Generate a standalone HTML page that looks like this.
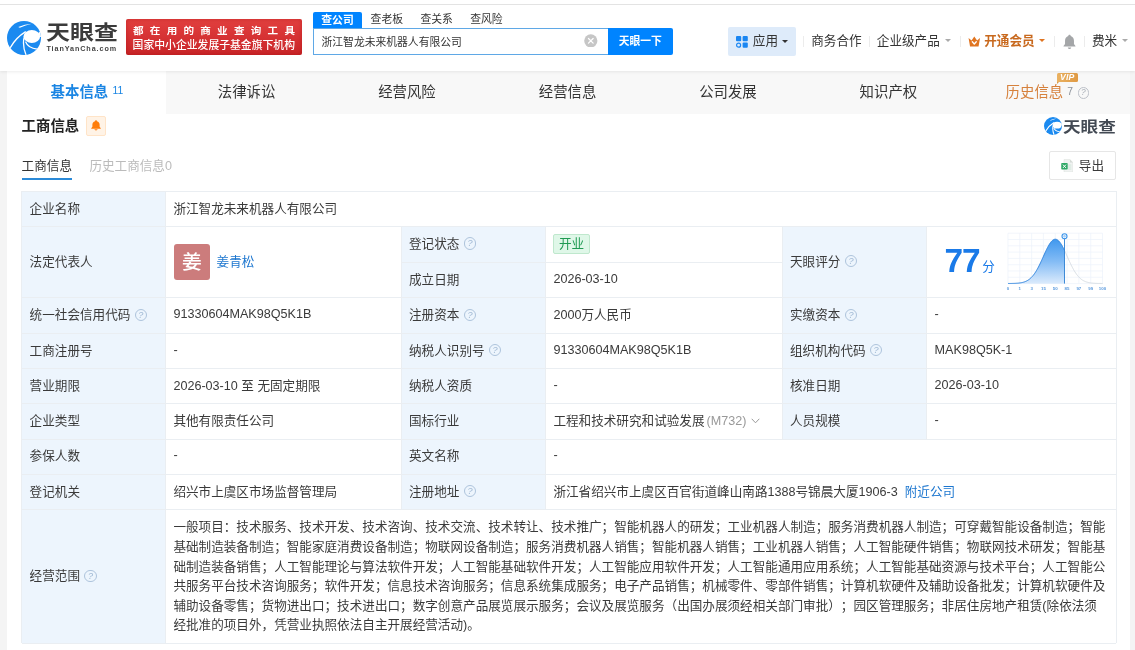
<!DOCTYPE html>
<html lang="zh-CN">
<head>
<meta charset="utf-8">
<title>浙江智龙未来机器人有限公司 - 天眼查</title>
<style>
*{box-sizing:border-box;margin:0;padding:0}
html,body{width:1135px;height:650px;overflow:hidden;background:#f4f4f4}
body{position:relative;font-family:"Liberation Sans","Noto Sans CJK SC",sans-serif;font-size:12.6px;color:#3a3a3a;-webkit-font-smoothing:antialiased;text-spacing-trim:space-all;will-change:transform}
.abs{position:absolute}
.t{position:absolute;white-space:nowrap;line-height:20px;height:20px}
/* header */
#hdr{position:absolute;left:0;top:0;width:1135px;height:70.6px;background:#fff;box-shadow:0 1px 3px rgba(0,0,0,.08);z-index:5}
#topline{position:absolute;left:0;top:4px;width:1135px;height:1px;background:#e3e3e3}
#banner{position:absolute;left:126px;top:19px;width:176px;height:36px;border-radius:2px;background:linear-gradient(180deg,#e2403f 0%,#d63234 50%,#c92528 100%);box-shadow:inset 0 0 4px rgba(150,0,0,.35);color:#fff;overflow:hidden}
#banner .l1{position:absolute;left:6.6px;top:5.9px;font-size:9.6px;font-weight:700;letter-spacing:5.7px;line-height:12px;white-space:nowrap;transform-origin:0 50%;transform:scaleX(1.1)}
#banner .l2{position:absolute;left:6.6px;top:20px;font-size:10.83px;font-weight:500;line-height:13px;white-space:nowrap;letter-spacing:0}
/* search */
.stab{position:absolute;top:11px;height:17px;line-height:17px;font-size:10.8px;color:#333;white-space:nowrap}
#stab1{left:313px;width:49px;background:#0084ff;color:#fff;font-weight:700;text-align:center;border-radius:2px 2px 0 0;top:12px;height:17px}
#sinput{position:absolute;left:313px;top:28px;width:296px;height:27px;border:1px solid #5fa8e6;background:#fff;border-right:none}
#sinput span{position:absolute;left:7.5px;top:0;line-height:26.6px;font-size:10.8px;color:#333;white-space:nowrap}
#sbtn{position:absolute;left:608px;top:28px;width:64.6px;height:27px;background:#0084ff;color:#fff;font-weight:700;font-size:10.8px;line-height:26px;text-align:center;border-radius:0 2px 2px 0}
#sclear{position:absolute;left:584.2px;top:33.6px;width:13.6px;height:13.6px}
/* nav right */
#appbtn{position:absolute;left:728px;top:27px;width:68.4px;height:28.6px;background:#deebfa;border-radius:2px}
.nv{position:absolute;top:31px;line-height:20px;font-size:12.6px;color:#333;white-space:nowrap}
.sep{position:absolute;top:36px;width:1px;height:11px;background:#ececec}
.caret{position:absolute;width:0;height:0;border-left:3.2px solid transparent;border-right:3.2px solid transparent;border-top:3.4px solid #aaa}
/* tab bar */
#tabbar{position:absolute;left:6.8px;top:70px;width:1123.4px;height:44px;background:#f8f8f8}
#tabact{position:absolute;left:0;top:0;width:159px;height:44px;background:#fff}
.tab{position:absolute;top:81.6px;line-height:20px;font-size:14.4px;color:#333;white-space:nowrap}
/* card */
#card{position:absolute;left:6.8px;top:114px;width:1123.4px;height:536px;background:#fff}
/* table */
.lab{position:absolute;background:#edf5fd}
.hl{position:absolute;left:21.8px;width:1094px;height:1px;background:#eaeef2}
.vl{position:absolute;width:1px;background:#eaeef2}
.q{display:inline-block;width:12.4px;height:12.4px;border:1px solid #aec4dc;border-radius:50%;vertical-align:-1.6px;margin-left:4.4px;position:relative}
.q:after{content:"?";position:absolute;left:0;top:0;width:10.4px;height:10.4px;line-height:10.8px;text-align:center;font-size:9.2px;color:#a0b9d4;font-family:"Liberation Sans",sans-serif}
.qg:after{color:#aab0b8;width:9.4px;height:9.4px;line-height:9.8px;font-size:8.4px}
.ln{margin-top:-1px}
.lk{color:#1c76cf}
</style>
</head>
<body>
<!-- HEADER -->
<div id="hdr">
  <div id="topline"></div>
  <!-- logo -->
  <svg class="abs" style="left:7.1px;top:20.7px" width="34" height="34" viewBox="0 0 100 100">
    <defs><clipPath id="lc"><circle cx="50" cy="50" r="50"/></clipPath></defs>
    <circle cx="50" cy="50" r="50" fill="#1b8af0"/>
    <g clip-path="url(#lc)" fill="none" stroke="#fff" stroke-linecap="round">
      <ellipse cx="73" cy="45.5" rx="24.5" ry="19" fill="#fff" stroke="none"/>
      <path d="M92 35.5 L102 27 L102 47 L97 47 Z" fill="#fff" stroke="none"/>
      <path d="M10 78 C20 60 34 44 54 32" stroke-width="4.2"/>
      <path d="M56 100 C50 85 46 68 50 50" stroke-width="3.8"/>
      <path d="M89 83 C74 81 60 75 55 62" stroke-width="3.6"/>
      <path d="M33 18 Q52 9 73 8 Q54 13 38 20 Z" fill="#fff" stroke="none"/>
    </g>
  </svg>
  <div class="abs" id="logotxt" style="left:45.6px;top:16.2px;font-family:'Noto Sans CJK SC',sans-serif;font-weight:700;font-size:20.4px;line-height:30px;color:#3b3b3b;white-space:nowrap;transform-origin:0 50%;transform:scaleX(1.175)">天眼查</div>
  <div class="abs" id="logosub" style="left:46.4px;top:44px;font-weight:700;font-size:7.2px;line-height:10px;letter-spacing:.92px;color:#444;white-space:nowrap">TianYanCha.com</div>
  <!-- banner -->
  <div id="banner"><div class="l1">都在用的商业查询工具</div><div class="l2">国家中小企业发展子基金旗下机构</div></div>
  <!-- search -->
  <div class="stab" id="stab1">查公司</div>
  <div class="stab" style="left:370.6px">查老板</div>
  <div class="stab" style="left:420.4px">查关系</div>
  <div class="stab" style="left:470.2px">查风险</div>
  <div id="sinput"><span>浙江智龙未来机器人有限公司</span></div>
  <svg id="sclear" viewBox="0 0 14 14"><circle cx="7" cy="7" r="6.8" fill="#c6c6c6"/><path d="M4.6 4.6 L9.4 9.4 M9.4 4.6 L4.6 9.4" stroke="#fff" stroke-width="1.3" stroke-linecap="round"/></svg>
  <div id="sbtn">天眼一下</div>
  <!-- right nav -->
  <div id="appbtn"></div>
  <svg class="abs" style="left:736.2px;top:36px" width="12" height="12" viewBox="0 0 12 12">
    <rect x="0" y="0" width="5.2" height="5.2" rx="1" fill="#1a86f2"/>
    <rect x="6.6" y="0" width="5.2" height="5.2" rx="1" fill="#1a86f2"/>
    <rect x="6.6" y="6.6" width="5.2" height="5.2" rx="1" fill="#1a86f2"/>
    <circle cx="2.6" cy="9.2" r="2" fill="none" stroke="#1a86f2" stroke-width="1.2"/>
  </svg>
  <div class="nv" style="left:752.8px">应用</div>
  <div class="caret" style="left:782.4px;top:40.2px;border-top-color:#333"></div>
  <div class="sep" style="left:803px"></div>
  <div class="nv" style="left:811.2px">商务合作</div>
  <div class="sep" style="left:869px"></div>
  <div class="nv" style="left:876.8px">企业级产品</div>
  <div class="caret" style="left:944.6px;top:39.2px"></div>
  <div class="sep" style="left:960px"></div>
  <svg class="abs" style="left:967.6px;top:35.6px" width="12.6" height="11" viewBox="0 0 25 22">
    <path d="M1 4 L7 9 L12.5 1 L18 9 L24 4 L21 21 L4 21 Z" fill="#e07420"/>
    <path d="M8.5 11.5 L12.5 16 L16.5 11.5" fill="none" stroke="#fff" stroke-width="2.6" stroke-linecap="round" stroke-linejoin="round"/>
  </svg>
  <div class="nv" style="left:984.2px;font-weight:700;color:#c8691e">开通会员</div>
  <div class="caret" style="left:1038.8px;top:39.2px;border-top-color:#e07420"></div>
  <div class="sep" style="left:1054.4px"></div>
  <svg class="abs" style="left:1063.4px;top:33.8px" width="13" height="15.4" viewBox="0 0 26 31">
    <path d="M13 1.5 C14.4 1.5 15.4 2.6 15.4 4 C19.6 5.2 22 9 22 13.5 L22 20 L25 24 L25 25.4 L1 25.4 L1 24 L4 20 L4 13.5 C4 9 6.4 5.2 10.6 4 C10.6 2.6 11.6 1.5 13 1.5 Z" fill="#a4a6a8"/>
    <path d="M9.6 27.2 L16.4 27.2 C16.4 29 14.9 30.2 13 30.2 C11.1 30.2 9.6 29 9.6 27.2 Z" fill="#a4a6a8"/>
  </svg>
  <div class="sep" style="left:1084px"></div>
  <div class="nv" style="left:1092px">费米</div>
  <div class="caret" style="left:1121.6px;top:39.2px"></div>
</div>

<!-- TAB BAR -->
<div id="tabbar"><div id="tabact"></div></div>
<div class="tab" style="left:50.6px;font-weight:700;color:#1a85e3">基本信息</div>
<div class="abs" style="left:112.4px;top:85.4px;font-size:10.4px;line-height:12px;color:#1a85e3">11</div>
<div class="tab" style="left:217.8px">法律诉讼</div>
<div class="tab" style="left:378.2px">经营风险</div>
<div class="tab" style="left:538.8px">经营信息</div>
<div class="tab" style="left:699.2px">公司发展</div>
<div class="tab" style="left:859.6px">知识产权</div>
<div class="tab" style="left:1005.6px;color:#d6813c">历史信息</div>

<div class="abs" style="left:1067.2px;top:86.2px;font-size:10.4px;line-height:12px;color:#8a9099">7</div>
<i class="q qg abs" style="left:1077.6px;top:86px;margin:0;width:11.4px;height:11.4px;border-color:#bcc0c8" id="hq"></i>
<div class="abs" id="vip" style="left:1056.6px;top:73px;width:21.2px;height:9.4px;border-radius:1.5px 1.5px 1.5px 0;background:linear-gradient(90deg,#eab262,#e09a44);color:#fff;font-size:8.6px;font-weight:700;font-style:italic;line-height:9.6px;text-align:center;letter-spacing:.1px">VIP</div>
<div class="abs" style="left:1056.6px;top:82.2px;width:0;height:0;border-top:2.6px solid #d99a48;border-right:2.6px solid transparent"></div>
<!-- CARD -->
<div id="card"></div>

<!-- section heading -->
<div class="abs" style="left:21.6px;top:116px;font-size:14.4px;font-weight:700;line-height:20px;color:#222;white-space:nowrap">工商信息</div>
<div class="abs" style="left:86px;top:116px;width:19.6px;height:19.6px;border:1px solid #ffe4c8;background:#fff3e6;border-radius:2px"></div>
<svg class="abs" style="left:91.1px;top:120.2px" width="10" height="10.6" viewBox="0 0 26 31" preserveAspectRatio="none">
  <path d="M13 1 C14.6 1 15.6 2.4 15.6 4 C19.8 5.2 22.4 9 22.4 13.5 L22.4 20 L25.4 24 L25.4 25.6 L0.6 25.6 L0.6 24 L3.6 20 L3.6 13.5 C3.6 9 6.2 5.2 10.4 4 C10.4 2.4 11.4 1 13 1 Z" fill="#ff7d0a"/>
  <path d="M9 27.4 L17 27.4 C17 29.4 15.2 30.6 13 30.6 C10.8 30.6 9 29.4 9 27.4 Z" fill="#ff7d0a"/>
</svg>
<!-- small logo right -->
<svg class="abs" style="left:1043.6px;top:117px" width="18" height="18" viewBox="0 0 100 100">
  <defs><clipPath id="lc2"><circle cx="50" cy="50" r="50"/></clipPath></defs>
  <circle cx="50" cy="50" r="50" fill="#1b8af0"/>
  <g clip-path="url(#lc2)" fill="none" stroke="#fff" stroke-linecap="round">
    <ellipse cx="73" cy="45.5" rx="24.5" ry="19" fill="#fff" stroke="none"/>
    <path d="M92 35.5 L102 27 L102 47 L97 47 Z" fill="#fff" stroke="none"/>
    <path d="M10 78 C20 60 34 44 54 32" stroke-width="6.5"/>
    <path d="M56 100 C50 85 46 68 50 50" stroke-width="5.6"/>
    <path d="M89 83 C74 81 60 75 55 62" stroke-width="5.6"/>
    <path d="M33 18 Q52 9 73 8 Q54 13 38 20 Z" fill="#fff" stroke="none"/>
  </g>
</svg>
<div class="abs" id="logo2txt" style="left:1063.4px;top:114px;font-family:'Noto Sans CJK SC',sans-serif;font-weight:700;font-size:14.8px;line-height:24px;color:#434a54;white-space:nowrap;transform-origin:0 50%;transform:scaleX(1.19)">天眼查</div>
<!-- sub tabs -->
<div class="t" style="left:21.6px;top:155.6px;color:#333">工商信息</div>
<div class="t" style="left:89.4px;top:155.6px;color:#bbb">历史工商信息0</div>
<div class="abs" style="left:21.8px;top:178.4px;width:50px;height:2px;background:#2b8ad8"></div>
<!-- export button -->
<div class="abs" style="left:1049.2px;top:151.4px;width:66.8px;height:28.6px;border:1px solid #e6e6e6;border-radius:2px;background:#fff"></div>
<svg class="abs" style="left:1061px;top:158.6px" width="12.4" height="13.6" viewBox="0 0 25 27">
  <path d="M6 1 L18 1 L24 7 L24 26 L6 26 Z" fill="#f1f3f2" stroke="#d9dedb" stroke-width="1"/>
  <path d="M18 1 L18 7 L24 7 Z" fill="#d4dad6"/>
  <rect x="14" y="11" width="7" height="2" fill="#cfe6d8"/><rect x="14" y="15" width="7" height="2" fill="#cfe6d8"/><rect x="14" y="19" width="7" height="2" fill="#cfe6d8"/>
  <rect x="0.5" y="8" width="13" height="13" rx="1.5" fill="#2fa866"/>
  <path d="M4 11.2 L10 17.8 M10 11.2 L4 17.8" stroke="#fff" stroke-width="2"/>
</svg>
<div class="t" style="left:1078.8px;top:155.6px">导出</div>
<!-- table -->
<div class="lab" style="left:21.8px;top:191.4px;width:143.8px;height:452.1px"></div>
<div class="lab" style="left:401.2px;top:226.2px;width:144.4px;height:283.1px"></div>
<div class="lab" style="left:782.2px;top:226.2px;width:144.6px;height:212.8px"></div>
<div class="hl" style="top:190.9px"></div>
<div class="hl" style="top:225.7px"></div>
<div class="hl" style="top:261.7px;left:401.2px;width:381.0px"></div>
<div class="hl" style="top:297.1px"></div>
<div class="hl" style="top:332.8px"></div>
<div class="hl" style="top:367.9px"></div>
<div class="hl" style="top:403.0px"></div>
<div class="hl" style="top:438.5px"></div>
<div class="hl" style="top:473.7px"></div>
<div class="hl" style="top:508.8px"></div>
<div class="hl" style="top:643.0px"></div>
<div class="vl" style="left:21.3px;top:191.4px;height:452.1px"></div>
<div class="vl" style="left:1115.5px;top:191.4px;height:452.1px"></div>
<div class="vl" style="left:165.1px;top:191.4px;height:452.1px"></div>
<div class="vl" style="left:400.7px;top:226.2px;height:283.1px"></div>
<div class="vl" style="left:545.1px;top:226.2px;height:283.1px"></div>
<div class="vl" style="left:781.7px;top:226.2px;height:212.8px"></div>
<div class="vl" style="left:926.3px;top:226.2px;height:212.8px"></div>
<div class="t" style="left:29.6px;top:198.8px;">企业名称</div>
<div class="t" style="left:173.4px;top:198.8px;">浙江智龙未来机器人有限公司</div>
<div class="t" style="left:29.6px;top:251.9px;">法定代表人</div>
<div class="t" style="left:29.6px;top:305.45px;">统一社会信用代码<i class="q"></i></div>
<div class="t ln" style="left:173.4px;top:305.45px;">91330604MAK98Q5K1B</div>
<div class="t" style="left:29.6px;top:340.85px;">工商注册号</div>
<div class="t ln" style="left:173.4px;top:340.85px;">-</div>
<div class="t" style="left:29.6px;top:375.95px;">营业期限</div>
<div class="t" style="left:173.4px;top:375.95px;">2026-03-10 至 无固定期限</div>
<div class="t" style="left:29.6px;top:411.1px;">企业类型</div>
<div class="t" style="left:173.4px;top:411.1px;">其他有限责任公司</div>
<div class="t" style="left:29.6px;top:446.45px;">参保人数</div>
<div class="t ln" style="left:173.4px;top:446.45px;">-</div>
<div class="t" style="left:29.6px;top:481.75px;">登记机关</div>
<div class="t" style="left:173.4px;top:481.75px;">绍兴市上虞区市场监督管理局</div>
<div class="t" style="left:29.6px;top:566.4px;">经营范围<i class="q"></i></div>
<div class="t" style="left:409.0px;top:234.2px;">登记状态<i class="q"></i></div>
<div class="t" style="left:409.0px;top:269.9px;">成立日期</div>
<div class="t ln" style="left:553.4px;top:269.9px;">2026-03-10</div>
<div class="t" style="left:409.0px;top:305.45px;">注册资本<i class="q"></i></div>
<div class="t" style="left:553.4px;top:305.45px;">2000万人民币</div>
<div class="t" style="left:409.0px;top:340.85px;">纳税人识别号<i class="q"></i></div>
<div class="t ln" style="left:553.4px;top:340.85px;">91330604MAK98Q5K1B</div>
<div class="t" style="left:409.0px;top:375.95px;">纳税人资质</div>
<div class="t ln" style="left:553.4px;top:375.95px;">-</div>
<div class="t" style="left:409.0px;top:411.1px;">国标行业</div>
<div class="t" style="left:553.4px;top:411.1px;">工程和技术研究和试验发展<span style="color:#999;margin-left:2px">(M732)</span><svg width="9" height="6" viewBox="0 0 9 6" style="margin-left:5px;vertical-align:1.5px"><path d="M0.7 0.8 L4.5 4.8 L8.3 0.8" fill="none" stroke="#999" stroke-width="1"/></svg></div>
<div class="t" style="left:409.0px;top:446.45px;">英文名称</div>
<div class="t ln" style="left:553.4px;top:446.45px;">-</div>
<div class="t" style="left:409.0px;top:481.75px;">注册地址<i class="q"></i></div>
<div class="t" style="left:553.4px;top:481.75px;">浙江省绍兴市上虞区百官街道峰山南路1388号锦晨大厦1906-3<span class="lk" style="margin-left:7px">附近公司</span></div>
<div class="t" style="left:790.0px;top:251.9px;">天眼评分<i class="q"></i></div>
<div class="t" style="left:790.0px;top:305.45px;">实缴资本<i class="q"></i></div>
<div class="t ln" style="left:934.6px;top:305.45px;">-</div>
<div class="t" style="left:790.0px;top:340.85px;">组织机构代码<i class="q"></i></div>
<div class="t ln" style="left:934.6px;top:340.85px;">MAK98Q5K-1</div>
<div class="t" style="left:790.0px;top:375.95px;">核准日期</div>
<div class="t ln" style="left:934.6px;top:375.95px;">2026-03-10</div>
<div class="t" style="left:790.0px;top:411.1px;">人员规模</div>
<div class="t ln" style="left:934.6px;top:411.1px;">-</div>
<div class="abs" id="tag" style="left:552.6px;top:233.8px;width:37.8px;height:20px;border:1px solid #bfe8cd;background:#dff7e8;border-radius:2px;color:#1f9a52;text-align:center;line-height:18px;font-size:12.6px">开业</div>
<div class="abs" id="ava" style="left:173.8px;top:244px;width:36px;height:36px;border-radius:3px;background:#cc7c7c;color:#fff;font-size:19.8px;font-weight:500;line-height:37.6px;text-align:center">姜</div>
<div class="t lk" style="left:216.6px;top:252px">姜青松</div>
<div class="t" style="left:173.4px;top:517.2px;">一般项目：技术服务、技术开发、技术咨询、技术交流、技术转让、技术推广；智能机器人的研发；工业机器人制造；服务消费机器人制造；可穿戴智能设备制造；智能</div>
<div class="t" style="left:173.4px;top:536.85px;">基础制造装备制造；智能家庭消费设备制造；物联网设备制造；服务消费机器人销售；智能机器人销售；工业机器人销售；人工智能硬件销售；物联网技术研发；智能基</div>
<div class="t" style="left:173.4px;top:556.5px;">础制造装备销售；人工智能理论与算法软件开发；人工智能基础软件开发；人工智能应用软件开发；人工智能通用应用系统；人工智能基础资源与技术平台；人工智能公</div>
<div class="t" style="left:173.4px;top:576.1px;">共服务平台技术咨询服务；软件开发；信息技术咨询服务；信息系统集成服务；电子产品销售；机械零件、零部件销售；计算机软硬件及辅助设备批发；计算机软硬件及</div>
<div class="t" style="left:173.4px;top:595.7px;">辅助设备零售；货物进出口；技术进出口；数字创意产品展览展示服务；会议及展览服务（出国办展须经相关部门审批）；园区管理服务；非居住房地产租赁(除依法须</div>
<div class="t" style="left:173.4px;top:615.3px;">经批准的项目外，凭营业执照依法自主开展经营活动)。</div>
<!-- score -->
<svg class="abs" id="chart" style="left:1000px;top:228px" width="112" height="66" viewBox="0 0 112 66">
<defs><linearGradient id="cg" x1="0" y1="0" x2="0" y2="1"><stop offset="0" stop-color="#4098ee"/><stop offset="0.5" stop-color="#84bcf5"/><stop offset="1" stop-color="#dcebfc"/></linearGradient></defs>
<path d="M8.00 5.20 L8.00 55.60 M19.81 5.20 L19.81 55.60 M31.62 5.20 L31.62 55.60 M43.44 5.20 L43.44 55.60 M55.25 5.20 L55.25 55.60 M67.06 5.20 L67.06 55.60 M78.88 5.20 L78.88 55.60 M90.69 5.20 L90.69 55.60 M102.50 5.20 L102.50 55.60 M8.00 5.20 L102.50 5.20 M8.00 11.50 L102.50 11.50 M8.00 17.80 L102.50 17.80 M8.00 24.10 L102.50 24.10 M8.00 30.40 L102.50 30.40 M8.00 36.70 L102.50 36.70 M8.00 43.00 L102.50 43.00 M8.00 49.30 L102.50 49.30 M8.00 55.60 L102.50 55.60" fill="none" stroke="#edf2fa" stroke-width="0.7"/>
<path d="M8.00 55.80 L8.00 55.48 L8.50 55.48 L9.00 55.47 L9.50 55.47 L10.00 55.46 L10.50 55.46 L11.00 55.45 L11.50 55.44 L12.00 55.43 L12.50 55.42 L13.00 55.41 L13.50 55.40 L14.00 55.38 L14.50 55.36 L15.00 55.34 L15.50 55.32 L16.00 55.29 L16.50 55.26 L17.00 55.23 L17.50 55.19 L18.00 55.15 L18.50 55.10 L19.00 55.04 L19.50 54.98 L20.00 54.91 L20.50 54.84 L21.00 54.75 L21.50 54.66 L22.00 54.56 L22.50 54.44 L23.00 54.32 L23.50 54.18 L24.00 54.02 L24.50 53.86 L25.00 53.67 L25.50 53.47 L26.00 53.25 L26.50 53.01 L27.00 52.75 L27.50 52.47 L28.00 52.17 L28.50 51.84 L29.00 51.49 L29.50 51.11 L30.00 50.70 L30.50 50.26 L31.00 49.80 L31.50 49.30 L32.00 48.77 L32.50 48.21 L33.00 47.62 L33.50 46.99 L34.00 46.33 L34.50 45.64 L35.00 44.91 L35.50 44.14 L36.00 43.35 L36.50 42.52 L37.00 41.65 L37.50 40.76 L38.00 39.83 L38.50 38.87 L39.00 37.89 L39.50 36.88 L40.00 35.85 L40.50 34.79 L41.00 33.72 L41.50 32.63 L42.00 31.53 L42.50 30.42 L43.00 29.30 L43.50 28.18 L44.00 27.07 L44.50 25.95 L45.00 24.85 L45.50 23.76 L46.00 22.69 L46.50 21.64 L47.00 20.62 L47.50 19.64 L48.00 18.68 L48.50 17.77 L49.00 16.90 L49.50 16.08 L50.00 15.32 L50.50 14.61 L51.00 13.95 L51.50 13.37 L52.00 12.84 L52.50 12.39 L53.00 12.01 L53.50 11.70 L54.00 11.46 L54.50 11.30 L55.00 11.21 L55.50 11.21 L56.00 11.28 L56.50 11.42 L57.00 11.64 L57.50 11.94 L58.00 12.31 L58.50 12.75 L59.00 13.26 L59.50 13.83 L60.00 14.47 L60.50 15.17 L61.00 15.93 L61.50 16.74 L62.00 17.59 L62.50 18.50 L63.00 19.44 L63.50 20.42 L64.00 21.44 L64.50 22.48 L64.50 55.80 Z" fill="url(#cg)"/>
<path d="M8.00 55.48 L8.50 55.48 L9.00 55.47 L9.50 55.47 L10.00 55.46 L10.50 55.46 L11.00 55.45 L11.50 55.44 L12.00 55.43 L12.50 55.42 L13.00 55.41 L13.50 55.40 L14.00 55.38 L14.50 55.36 L15.00 55.34 L15.50 55.32 L16.00 55.29 L16.50 55.26 L17.00 55.23 L17.50 55.19 L18.00 55.15 L18.50 55.10 L19.00 55.04 L19.50 54.98 L20.00 54.91 L20.50 54.84 L21.00 54.75 L21.50 54.66 L22.00 54.56 L22.50 54.44 L23.00 54.32 L23.50 54.18 L24.00 54.02 L24.50 53.86 L25.00 53.67 L25.50 53.47 L26.00 53.25 L26.50 53.01 L27.00 52.75 L27.50 52.47 L28.00 52.17 L28.50 51.84 L29.00 51.49 L29.50 51.11 L30.00 50.70 L30.50 50.26 L31.00 49.80 L31.50 49.30 L32.00 48.77 L32.50 48.21 L33.00 47.62 L33.50 46.99 L34.00 46.33 L34.50 45.64 L35.00 44.91 L35.50 44.14 L36.00 43.35 L36.50 42.52 L37.00 41.65 L37.50 40.76 L38.00 39.83 L38.50 38.87 L39.00 37.89 L39.50 36.88 L40.00 35.85 L40.50 34.79 L41.00 33.72 L41.50 32.63 L42.00 31.53 L42.50 30.42 L43.00 29.30 L43.50 28.18 L44.00 27.07 L44.50 25.95 L45.00 24.85 L45.50 23.76 L46.00 22.69 L46.50 21.64 L47.00 20.62 L47.50 19.64 L48.00 18.68 L48.50 17.77 L49.00 16.90 L49.50 16.08 L50.00 15.32 L50.50 14.61 L51.00 13.95 L51.50 13.37 L52.00 12.84 L52.50 12.39 L53.00 12.01 L53.50 11.70 L54.00 11.46 L54.50 11.30 L55.00 11.21 L55.50 11.21 L56.00 11.28 L56.50 11.42 L57.00 11.64 L57.50 11.94 L58.00 12.31 L58.50 12.75 L59.00 13.26 L59.50 13.83 L60.00 14.47 L60.50 15.17 L61.00 15.93 L61.50 16.74 L62.00 17.59 L62.50 18.50 L63.00 19.44 L63.50 20.42 L64.00 21.44 L64.50 22.48" fill="none" stroke="#2f84de" stroke-width="1"/>
<path d="M64.50 22.48 L65.00 23.55 L65.50 24.63 L66.00 25.73 L66.50 26.84 L67.00 27.96 L67.50 29.08 L68.00 30.20 L68.50 31.31 L69.00 32.41 L69.50 33.50 L70.00 34.58 L70.50 35.64 L71.00 36.68 L71.50 37.69 L72.00 38.68 L72.50 39.64 L73.00 40.57 L73.50 41.47 L74.00 42.35 L74.50 43.18 L75.00 43.99 L75.50 44.76 L76.00 45.49 L76.50 46.20 L77.00 46.86 L77.50 47.50 L78.00 48.10 L78.50 48.66 L79.00 49.20 L79.50 49.70 L80.00 50.17 L80.50 50.62 L81.00 51.03 L81.50 51.41 L82.00 51.77 L82.50 52.11 L83.00 52.41 L83.50 52.70 L84.00 52.96 L84.50 53.21 L85.00 53.43 L85.50 53.63 L86.00 53.82 L86.50 53.99 L87.00 54.15 L87.50 54.29 L88.00 54.42 L88.50 54.54 L89.00 54.64 L89.50 54.74 L90.00 54.82 L90.50 54.90 L91.00 54.97 L91.50 55.03 L92.00 55.09 L92.50 55.14 L93.00 55.18 L93.50 55.22 L94.00 55.26 L94.50 55.29 L95.00 55.31 L95.50 55.34 L96.00 55.36 L96.50 55.38 L97.00 55.39 L97.50 55.41 L98.00 55.42 L98.50 55.43 L99.00 55.44 L99.50 55.45 L100.00 55.46 L100.50 55.46 L101.00 55.47 L101.50 55.47 L102.00 55.48 L102.50 55.48" fill="none" stroke="#d3d9e0" stroke-width="0.9"/>
<path d="M64.50 10.00 L64.50 55.60" stroke="#2b7fd2" stroke-width="0.9"/>
<circle cx="64.50" cy="8.20" r="2.5" fill="#fff" stroke="#3a94ea" stroke-width="1.1"/>
<circle cx="64.50" cy="8.20" r="0.9" fill="#cfe4fa" stroke="#5aa4ec" stroke-width="0.5"/>
<text x="8.00" y="62.40" font-size="4.4" font-weight="700" fill="#5a9ade" text-anchor="middle" font-family="Liberation Sans, sans-serif">0</text>
<text x="19.81" y="62.40" font-size="4.4" font-weight="700" fill="#5a9ade" text-anchor="middle" font-family="Liberation Sans, sans-serif">1</text>
<text x="31.62" y="62.40" font-size="4.4" font-weight="700" fill="#5a9ade" text-anchor="middle" font-family="Liberation Sans, sans-serif">3</text>
<text x="43.44" y="62.40" font-size="4.4" font-weight="700" fill="#5a9ade" text-anchor="middle" font-family="Liberation Sans, sans-serif">15</text>
<text x="55.25" y="62.40" font-size="4.4" font-weight="700" fill="#5a9ade" text-anchor="middle" font-family="Liberation Sans, sans-serif">50</text>
<text x="67.06" y="62.40" font-size="4.4" font-weight="700" fill="#5a9ade" text-anchor="middle" font-family="Liberation Sans, sans-serif">85</text>
<text x="78.88" y="62.40" font-size="4.4" font-weight="700" fill="#5a9ade" text-anchor="middle" font-family="Liberation Sans, sans-serif">97</text>
<text x="90.69" y="62.40" font-size="4.4" font-weight="700" fill="#5a9ade" text-anchor="middle" font-family="Liberation Sans, sans-serif">99</text>
<text x="102.50" y="62.40" font-size="4.4" font-weight="700" fill="#5a9ade" text-anchor="middle" font-family="Liberation Sans, sans-serif">100</text>
</svg>
<div class="abs" id="score" style="left:944.6px;top:241.5px;font-size:33.4px;font-weight:700;line-height:38px;color:#1a7ae8;letter-spacing:-1.2px;white-space:nowrap">77</div>
<div class="abs" style="left:982.2px;top:256.6px;font-size:12.6px;line-height:20px;color:#1a7ae8">分</div>

</body>
</html>
